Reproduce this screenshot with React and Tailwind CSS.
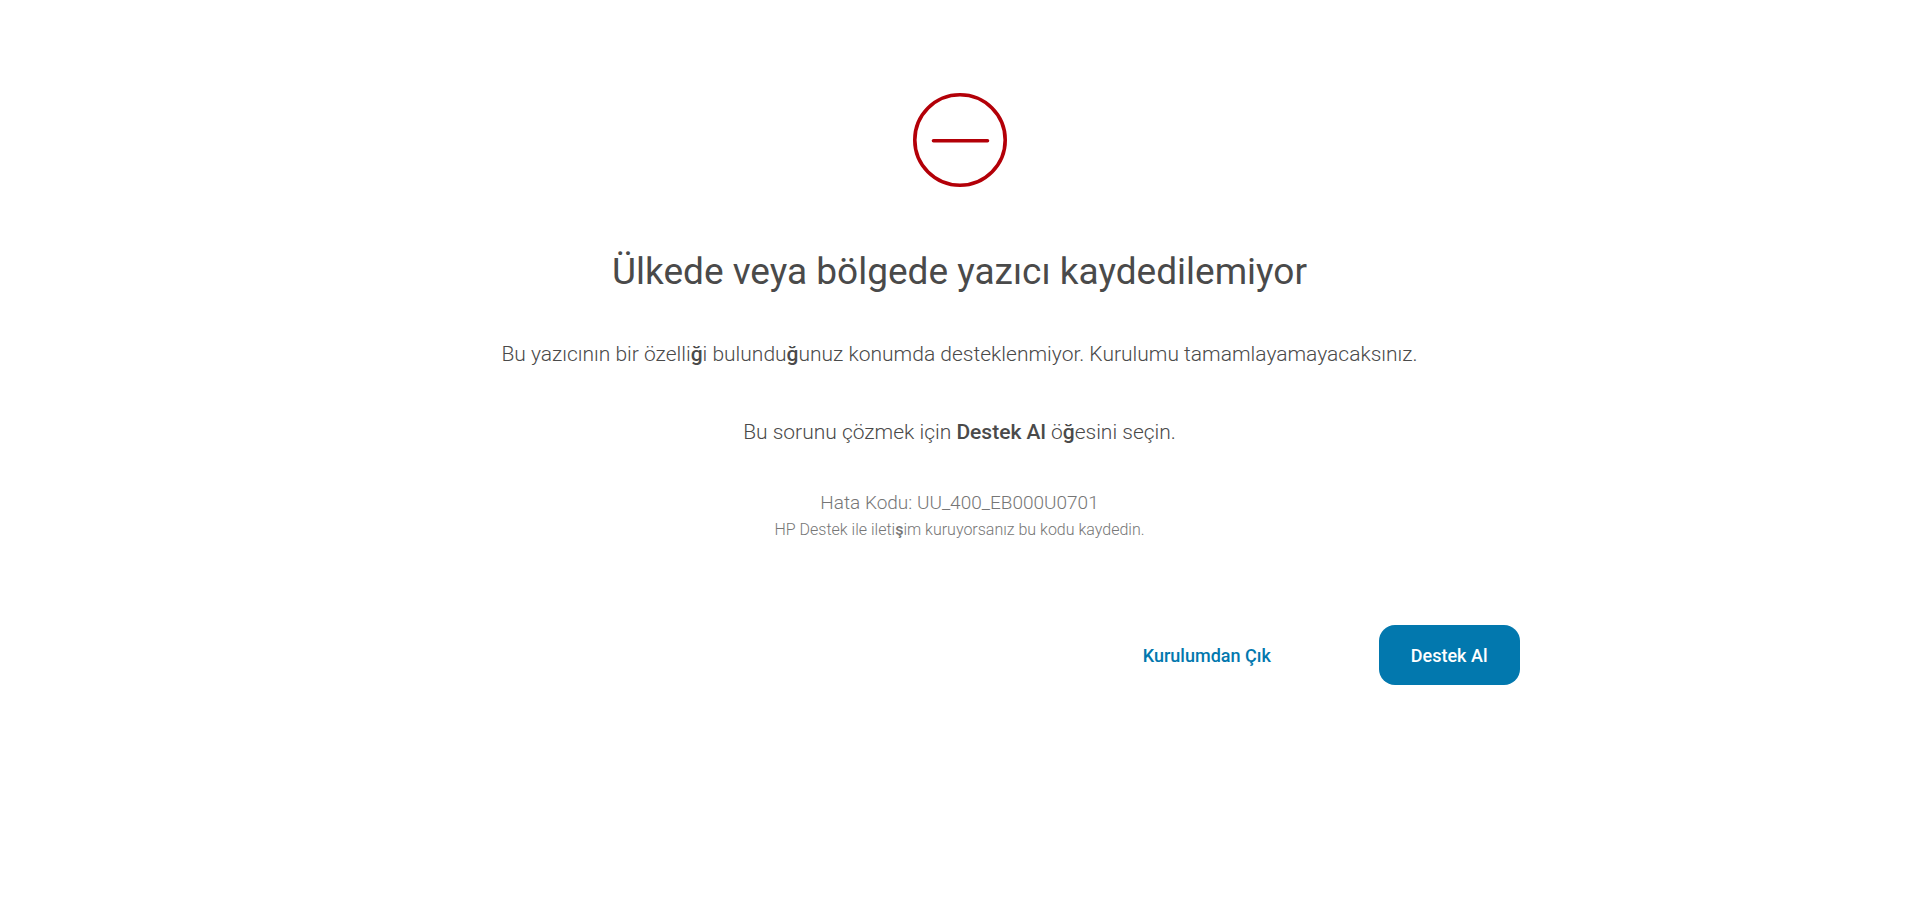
function Heavy({ children }) {
  return <span className="font-medium">{children}</span>;
}

function ErrorIcon() {
  return (
    <svg viewBox="0 0 94 94" className="size-[94px]" fill="none" stroke="#b30008" aria-hidden="true">
      <circle cx="47" cy="47" r="45.2" strokeWidth="3.6" />
      <path d="M20.5 47.7H74.5" strokeWidth="3.6" strokeLinecap="round" />
    </svg>
  );
}

export default function App() {
  return (
    <main className="min-h-screen bg-white px-6 pt-[93px] font-['Roboto','Noto_Sans',sans-serif] text-[#4a4a4a]">
      <div className="mx-auto flex w-full max-w-[1120px] flex-col items-center text-center">
        <ErrorIcon />
        <h1 className="mt-[61px] text-[37px] leading-[48px] font-normal">
          Ülkede veya bölgede yazıcı kaydedilemiyor
        </h1>
        <p className="mt-[42px] text-[21px] leading-8 font-light">
          Bu yazıcının bir özelli<Heavy>ğ</Heavy>i bulundu<Heavy>ğ</Heavy>unuz konumda desteklenmiyor. Kurulumu
          tamamlayamayacaksınız.
        </p>
        <p className="mt-[46px] text-[21px] leading-8 font-light">
          Bu sorunu çözmek için <strong className="font-medium">Destek Al</strong> ö<Heavy>ğ</Heavy>esini seçin.
        </p>
        <p className="mt-[41px] text-[19px] leading-7 font-light text-[#767676]">
          Hata Kodu: UU_400_EB000U0701
        </p>
        <p className="text-[16px] leading-[26px] font-light text-[#767676]">
          HP Destek ile ileti<Heavy>ş</Heavy>im kuruyorsanız bu kodu kaydedin.
        </p>
        <div className="mt-[82px] flex gap-[76px] self-end">
          <button type="button" className="h-[60px] px-8 text-[18px] font-medium text-[#0278ae]">
            Kurulumdan Çık
          </button>
          <button type="button" className="h-[60px] rounded-2xl bg-[#0278ae] px-8 text-[18px] font-medium text-white">
            Destek Al
          </button>
        </div>
      </div>
    </main>
  );
}
